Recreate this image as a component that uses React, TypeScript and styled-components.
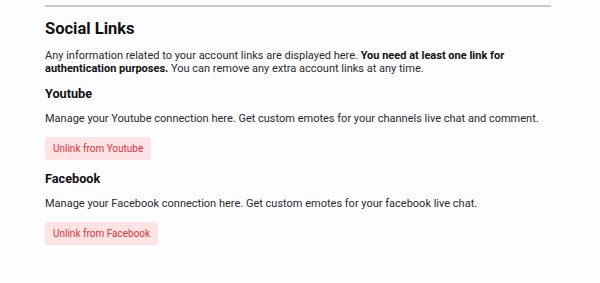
import styled, { createGlobalStyle } from "styled-components";

const GlobalStyle = createGlobalStyle`
  html, body {
    margin: 0;
    padding: 0;
    background: #fdfcfe;
  }

  body {
    font-family: Roboto, "Liberation Sans", sans-serif;
    color: #1c1c1e;
  }
`;

const Page = styled.div`
  width: 600px;
  height: 283px;
  padding: 5px 49px 0 45px;
  box-sizing: border-box;
`;

const Divider = styled.hr`
  margin: 0;
  border: 0;
  border-top: 2px solid #c9c8cc;
`;

const Title = styled.h2`
  margin: 12px 0 0;
  font-size: 16.5px;
  line-height: 20px;
  font-weight: 700;
  color: #111;
`;

const Intro = styled.p`
  margin: 10px 0 0;
  font-size: 11px;
  line-height: 13px;
  color: #2a2a2e;

  b {
    color: #111;
    font-weight: 700;
  }
`;

const Section = styled.section`
  margin-top: 10.5px;

  & + & {
    margin-top: 11px;
  }
`;

const SectionTitle = styled.h3`
  margin: 0;
  font-size: 12.7px;
  line-height: 16px;
  font-weight: 700;
  color: #111;
`;

const Description = styled.p`
  margin: 10px 0 0;
  font-size: 11px;
  line-height: 14px;
  color: #2a2a2e;
`;

const UnlinkButton = styled.button`
  display: block;
  margin-top: 11px;
  height: 23px;
  padding: 0 8px;
  border: 0;
  border-radius: 3px;
  background: #fde3e3;
  color: #e0323a;
  font-family: inherit;
  font-size: 10px;
  cursor: pointer;
`;

const links = [
  {
    name: "Youtube",
    text: "Manage your Youtube connection here. Get custom emotes for your channels live chat and comment.",
  },
  {
    name: "Facebook",
    text: "Manage your Facebook connection here. Get custom emotes for your facebook live chat.",
  },
];

function App() {
  return (
    <>
      <GlobalStyle />
      <Page>
        <Divider />
        <Title>Social Links</Title>
        <Intro>
          Any information related to your account links are displayed here.{" "}
          <b>You need at least one link for authentication purposes.</b> You can
          remove any extra account links at any time.
        </Intro>
        {links.map((link) => (
          <Section key={link.name}>
            <SectionTitle>{link.name}</SectionTitle>
            <Description>{link.text}</Description>
            <UnlinkButton>Unlink from {link.name}</UnlinkButton>
          </Section>
        ))}
      </Page>
    </>
  );
}

export default App;
